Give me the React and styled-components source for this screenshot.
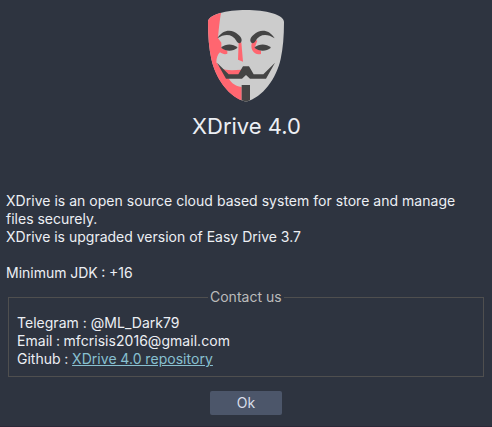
import React from "react";
import styled, { createGlobalStyle } from "styled-components";

const Global = createGlobalStyle`
  * { box-sizing: border-box; }
  body { margin: 0; background: #2e3440; }
`;

const Dialog = styled.main`
  width: 492px;
  height: 427px;
  display: flex;
  flex-direction: column;
  background: #2e3440;
  border-bottom: 1px solid #2b2838;
  color: #eceff4;
  font: 14px/18px Inter, sans-serif;
  overflow: hidden;
`;

const Header = styled.header`
  height: 192px;
  padding-top: 9px;
  display: flex;
  flex-direction: column;
  align-items: center;
`;

const Logo = styled.svg`
  width: 78px;
  height: 94px;
  display: block;
`;

const Title = styled.h1`
  margin: 9px 0 0;
  padding-left: 1px;
  font-size: 22px;
  line-height: 28px;
  font-weight: 400;
`;

const Description = styled.section`
  padding-left: 6px;
  height: 96px;
`;

const Line = styled.div`
  height: 18px;
  white-space: pre;
  letter-spacing: ${(p) => p.$spacing || 0}px;
  word-spacing: ${(p) => p.$gap || 0}px;
`;

const Contact = styled.fieldset`
  width: 476px;
  height: 89px;
  margin: 0 0 0 8px;
  padding: 8px 8px 0;
  border: 1px solid #4f4f4f;
`;

const Legend = styled.legend`
  width: 76px;
  margin: 0 auto;
  padding: 0 0 0 2px;
  height: 18px;
  color: #bbbbbb;
  white-space: nowrap;
`;

const Link = styled.a`
  color: #88c0d0;
  text-decoration: underline;
  letter-spacing: 0.04px;
`;

const Footer = styled.footer`
  display: flex;
  justify-content: center;
  padding-top: 14px;
`;

const OkButton = styled.button`
  width: 72px;
  height: 24px;
  border: 0;
  border-radius: 2px;
  padding: 0;
  background: #4c566a;
  color: #d8dee9;
  font: inherit;
`;

function MaskLogo() {
  return (
    <Logo viewBox="3 3 234 282" aria-hidden="true">
      <path fill="#cccccc" d="M6 42C5 20 62 6 120 6S235 20 234 42C234 85 231 122 224 153C211 212 171 268 120 281C69 268 29 212 16 153C9 122 6 85 6 42Z" />
      <g fill="#ff6670">
        <path d="M6 42C5 31 20 21 45 14C41 38 38 64 36 90L46 104V120L64 128V137C57 140 49 138 42 133C35 139 31 151 31 163L43 180C59 188 80 187 106 185L100 202H65C70 221 85 235 107 237V277C63 260 28 208 16 153C9 122 6 85 6 42Z" />
        <path d="M98 103H106L111 161L96 155Z" />
        <path d="M145 94C136 101 134 116 139 127C145 138 155 141 165 138V128L146 119L154 98Z" />
      </g>
      <g fill="#444444">
        <path d="M34 91C50 65 77 62 97 80C107 88 109 97 105 103C101 108 94 105 91 98C80 78 57 75 34 91Z" />
        <path d="M206 91C190 65 163 62 143 80C133 88 131 97 135 103C139 108 146 105 149 98C160 78 183 75 206 91Z" />
        <path d="M45 119C60 106 80 106 95 119C80 131 60 131 45 119Z" />
        <path d="M145 119C160 106 180 106 195 119C180 131 160 131 145 119Z" />
        <path d="M33 164L68 199H97L111 175H129L143 199H172L207 164L180 212H132L120 201L108 212H60Z" />
        <path d="M107 231H132V277L120 281L107 277Z" />
      </g>
    </Logo>
  );
}

export default function App() {
  return (
    <Dialog>
      <Global />
      <Header>
        <MaskLogo />
        <Title>XDrive 4.0</Title>
      </Header>
      <Description>
        <Line $spacing={0.025}>XDrive is an open source cloud based system for store and manage</Line>
        <Line>files securely.</Line>
        <Line>XDrive is upgraded version of Easy Drive 3.7</Line>
        <Line> </Line>
        <Line $gap={-0.3}>Minimum JDK : +16</Line>
      </Description>
      <Contact>
        <Legend>Contact us</Legend>
        <Line $spacing={0.02}>Telegram : @ML_Dark79</Line>
        <Line $spacing={0.04} $gap={-0.5}>Email : mfcrisis2016@gmail.com</Line>
        <Line $gap={-0.2}>Github : <Link>XDrive 4.0 repository</Link></Line>
      </Contact>
      <Footer>
        <OkButton>Ok</OkButton>
      </Footer>
    </Dialog>
  );
}
